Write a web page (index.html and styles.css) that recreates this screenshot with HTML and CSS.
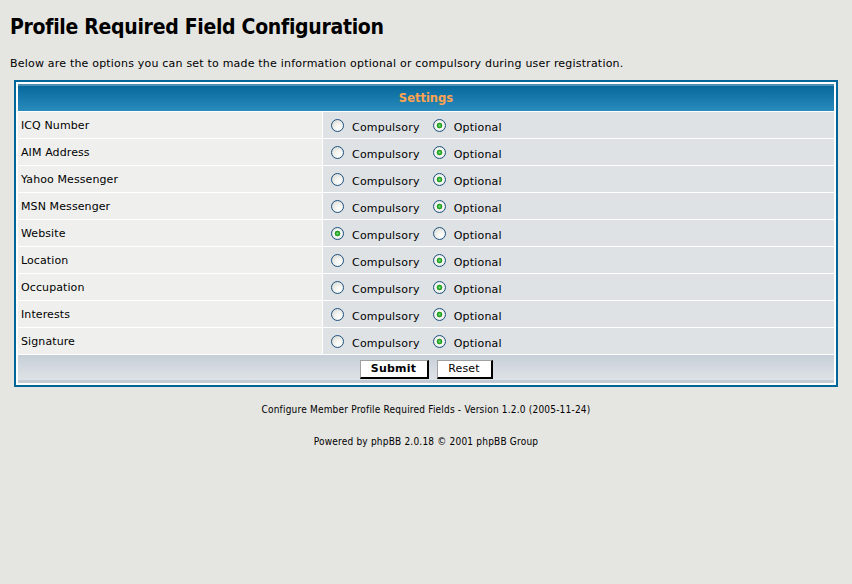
FILE: index.html
```html
<!DOCTYPE html>
<html>
<head>
<meta charset="utf-8">
<link rel="stylesheet" href="styles.css">
</head>
<body>
<div class="page">
  <h1 class="title">Profile Required Field Configuration</h1>
  <p class="intro">Below are the options you can set to made the information optional or compulsory during user registration.</p>
  <div class="forumline">
    <table class="grid">
      <tr><th colspan="2" class="thHead">Settings</th></tr>
      <tr><td class="row1">ICQ Number</td><td class="row2"><label class="opt"><input type="radio" name="icq"> Compulsory</label><label class="opt"><input type="radio" name="icq" checked> Optional</label></td></tr>
      <tr><td class="row1">AIM Address</td><td class="row2"><label class="opt"><input type="radio" name="aim"> Compulsory</label><label class="opt"><input type="radio" name="aim" checked> Optional</label></td></tr>
      <tr><td class="row1">Yahoo Messenger</td><td class="row2"><label class="opt"><input type="radio" name="yim"> Compulsory</label><label class="opt"><input type="radio" name="yim" checked> Optional</label></td></tr>
      <tr><td class="row1">MSN Messenger</td><td class="row2"><label class="opt"><input type="radio" name="msn"> Compulsory</label><label class="opt"><input type="radio" name="msn" checked> Optional</label></td></tr>
      <tr><td class="row1">Website</td><td class="row2"><label class="opt"><input type="radio" name="web" checked> Compulsory</label><label class="opt"><input type="radio" name="web"> Optional</label></td></tr>
      <tr><td class="row1">Location</td><td class="row2"><label class="opt"><input type="radio" name="loc"> Compulsory</label><label class="opt"><input type="radio" name="loc" checked> Optional</label></td></tr>
      <tr><td class="row1">Occupation</td><td class="row2"><label class="opt"><input type="radio" name="occ"> Compulsory</label><label class="opt"><input type="radio" name="occ" checked> Optional</label></td></tr>
      <tr><td class="row1">Interests</td><td class="row2"><label class="opt"><input type="radio" name="int"> Compulsory</label><label class="opt"><input type="radio" name="int" checked> Optional</label></td></tr>
      <tr><td class="row1">Signature</td><td class="row2"><label class="opt"><input type="radio" name="sig"> Compulsory</label><label class="opt"><input type="radio" name="sig" checked> Optional</label></td></tr>
      <tr><td colspan="2" class="catBottom"><button class="mainoption" type="button">Submit</button><button class="liteoption" type="button">Reset</button></td></tr>
    </table>
  </div>
  <p class="gensmall first">Configure Member Profile Required Fields - Version 1.2.0 (2005-11-24)</p>
  <p class="gensmall">Powered by phpBB 2.0.18 &copy; 2001 phpBB Group</p>
</div>
</body>
</html>
```
FILE: styles.css
```css
html, body {
  margin: 0;
  padding: 0;
  background: #e5e5e2;
}
.page {
  padding: 0 14px 0 14px;
  font-family: "DejaVu Sans", Verdana, sans-serif;
  color: #000;
}
.title {
  margin: 0 0 0 -4px;
  padding-top: 12px;
  font-family: "DejaVu Sans Condensed", "DejaVu Sans", sans-serif;
  font-size: 21px;
  letter-spacing: -0.3px;
  font-weight: bold;
  line-height: 30px;
}
.intro {
  margin: 15px 0 0 -4px;
  font-size: 11px;
  letter-spacing: 0.2px;
  line-height: 14px;
}
.forumline {
  margin-top: 9px;
  border: 2px solid #006699;
  background: #fff;
  padding: 1px;
}
.grid {
  width: 100%;
  border-collapse: separate;
  border-spacing: 1px;
  font-size: 11px;
}
.thHead {
  height: 27px;
  padding: 0;
  background: linear-gradient(#4a8fb3 0, #4a8fb3 2px, #07689c 2px, #2a8bbd 100%);
  color: #ffa34f;
  font-weight: bold;
  font-size: 11.5px;
  text-align: center;
}
.grid td {
  height: 26px;
  padding: 0 3px;
}
.row1 {
  width: 298px;
  background: #eff0ee;
  letter-spacing: 0.1px;
}
.row2 {
  background: #dee2e5;
  padding-left: 8px !important;
}
.opt {
  display: inline-flex;
  align-items: center;
  gap: 8px;
  margin-right: 13px;
  vertical-align: middle;
  position: relative;
  top: 2px;
  letter-spacing: 0.2px;
}
.opt input {
  appearance: none;
  -webkit-appearance: none;
  width: 13px;
  height: 13px;
  margin: 0;
  border: 1px solid #1c5180;
  border-radius: 50%;
  background: radial-gradient(circle at 65% 70%, #ffffff 0, #f4f4f1 35%, #d5d4cd 100%);
  box-sizing: border-box;
  position: relative;
  top: -2px;
}
.opt input:checked {
  background: radial-gradient(circle at 50% 50%, #7fdc7f 0, #21a121 2px, #2a9e2a 2.6px, #ffffff 3.2px, #f2f2ef 55%, #d5d4cd 100%);
}
.grid td.catBottom {
  height: 28px;
  padding: 0;
  text-align: center;
  background: linear-gradient(#c6cfd7 0, #d3d9df 45%, #dee2e6 88%, #c4cbd2 88%, #c4cbd2 100%);
}
.catBottom button {
  font-family: "DejaVu Sans", Verdana, sans-serif;
  font-size: 11px;
  letter-spacing: 0.2px;
  background: #fff;
  color: #000;
  height: 19px;
  padding: 0 8px;
  margin: 0 4px;
  border-style: solid;
  border-width: 1px 2px 2px 1px;
  border-color: #a0a0a0 #000 #000 #a0a0a0;
  line-height: 15px;
  vertical-align: middle;
}
.mainoption {
  font-weight: bold;
  width: 69px;
}
.liteoption {
  width: 56px;
}
.gensmall {
  margin: 0;
  text-align: center;
  font-family: "DejaVu Sans Condensed", "DejaVu Sans", sans-serif;
  font-size: 10px;
  letter-spacing: 0.2px;
  line-height: 13px;
}
.gensmall.first {
  margin-top: 16px;
  margin-bottom: 19px;
}
```
